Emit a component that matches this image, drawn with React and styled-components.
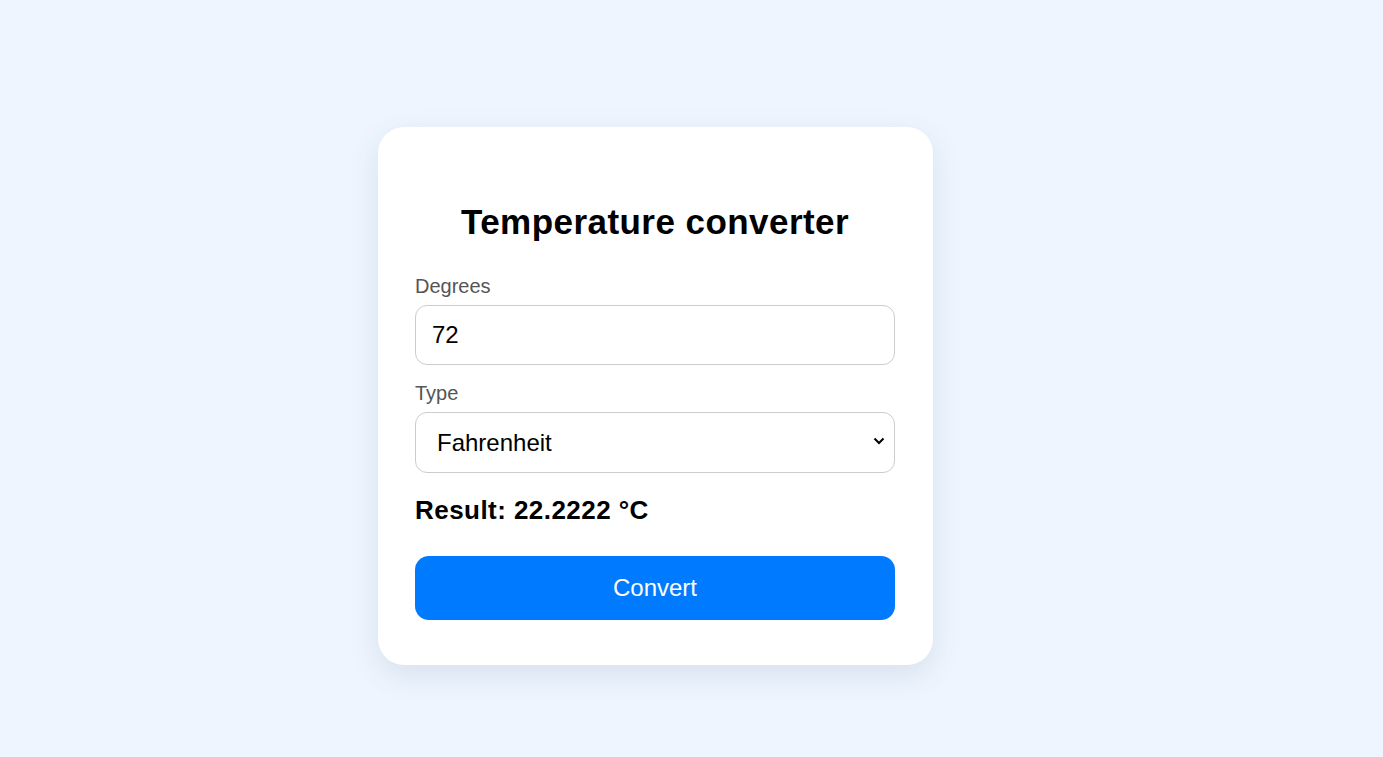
import React, { useState } from "react";
import styled, { createGlobalStyle } from "styled-components";

const Global = createGlobalStyle`
  html, body { margin: 0; padding: 0; }
  body {
    background: #eef5fe;
    font-family: "Liberation Sans", Arial, sans-serif;
    min-height: 757px;
  }
`;

const Page = styled.main`
  padding: 127px 0 0 378px;
`;

const Card = styled.section`
  width: 555px;
  box-sizing: border-box;
  padding: 40px 38px 45px 37px;
  background: #ffffff;
  border-radius: 26px;
  box-shadow: 0 10px 30px rgba(60, 80, 120, 0.12);
`;

const Title = styled.h2`
  margin: 35px 0 33px;
  text-align: center;
  font-size: 35px;
  font-weight: 700;
  letter-spacing: 0.45px;
  color: #000;
`;

const Label = styled.label`
  display: block;
  margin-bottom: 7px;
  font-size: 20px;
  color: #555;
`;

const fieldCss = `
  display: block;
  width: 100%;
  box-sizing: border-box;
  border: 1px solid #cccccc;
  border-radius: 12px;
  background: #fff;
  font-family: "Liberation Sans", Arial, sans-serif;
  font-size: 24px;
  color: #000;
  padding: 0 16px;
  outline: none;
`;

const Input = styled.input`
  ${fieldCss}
  height: 60px;
  margin-bottom: 17px;
`;

const SelectWrap = styled.div`
  position: relative;
`;

const Select = styled.select`
  ${fieldCss}
  height: 61px;
  appearance: none;
  -webkit-appearance: none;
  padding-left: 21px;
  padding-right: 40px;
`;

const Chevron = styled.svg`
  position: absolute;
  right: 10px;
  top: 50%;
  width: 12px;
  height: 8px;
  margin-top: -6px;
  pointer-events: none;
`;

const Result = styled.p`
  margin: 22px 0 30px;
  font-size: 26px;
  font-weight: 700;
  letter-spacing: 0.45px;
  color: #000;
`;

const Button = styled.button`
  display: block;
  width: 100%;
  height: 64px;
  border: none;
  border-radius: 14px;
  background: #007bff;
  color: #fff;
  font-family: "Liberation Sans", Arial, sans-serif;
  font-size: 24px;
  cursor: pointer;
`;

export default function App() {
  const [deg, setDeg] = useState("72");
  const [type, setType] = useState("F");
  return (
    <>
      <Global />
      <Page>
        <Card>
          <Title>Temperature converter</Title>
          <Label htmlFor="deg">Degrees</Label>
          <Input id="deg" value={deg} onChange={(e) => setDeg(e.target.value)} />
          <Label htmlFor="type">Type</Label>
          <SelectWrap>
            <Select id="type" value={type} onChange={(e) => setType(e.target.value)}>
              <option value="F">Fahrenheit</option>
              <option value="C">Celsius</option>
            </Select>
            <Chevron viewBox="0 0 12 8" aria-hidden="true">
              <path d="M1.5 1.5 L6 6 L10.5 1.5" fill="none" stroke="#000" strokeWidth="2" />
            </Chevron>
          </SelectWrap>
          <Result>Result: 22.2222 °C</Result>
          <Button>Convert</Button>
        </Card>
      </Page>
    </>
  );
}
